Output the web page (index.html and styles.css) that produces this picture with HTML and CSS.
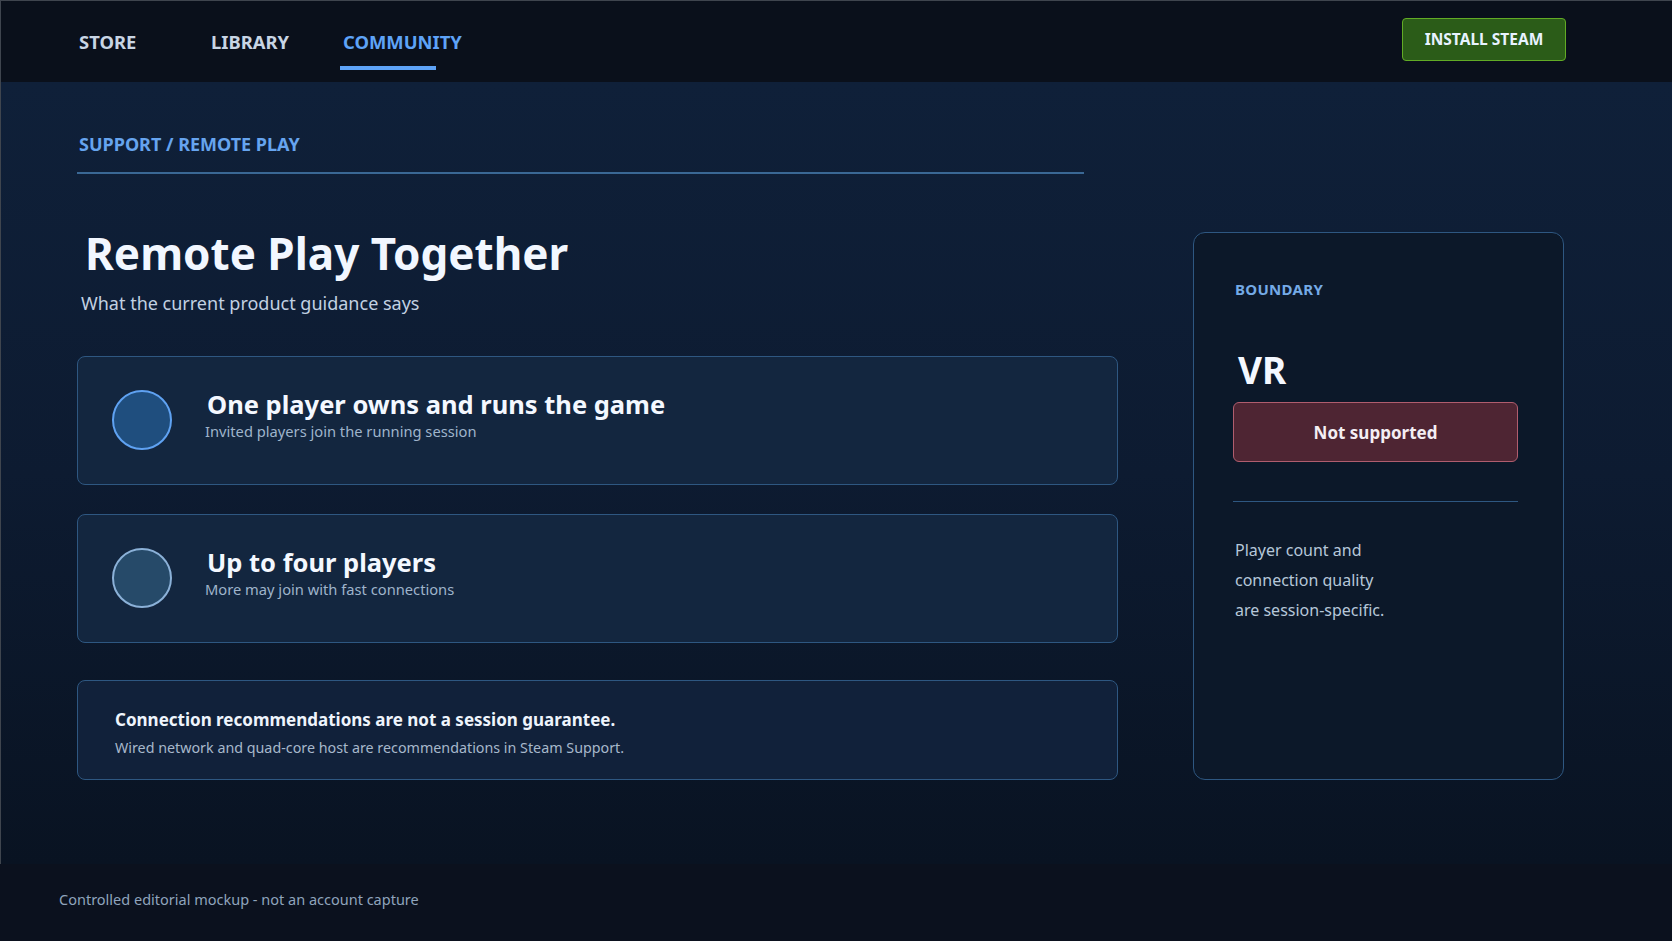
FILE: index.html
```html
<!DOCTYPE html>
<html lang="en">
<head>
<meta charset="utf-8">
<title>Remote Play Together</title>
<link rel="stylesheet" href="styles.css">
</head>
<body>
<div class="frame">
  <header class="topbar">
    <nav class="nav">
      <a class="nav-item">STORE</a>
      <a class="nav-item">LIBRARY</a>
      <a class="nav-item active">COMMUNITY</a>
    </nav>
    <a class="install">INSTALL STEAM</a>
  </header>
  <main class="main">
    <div class="crumb">SUPPORT / REMOTE PLAY</div>
    <div class="content">
      <section class="left">
        <h1 class="title">Remote Play Together</h1>
        <p class="subtitle">What the current product guidance says</p>
        <div class="card">
          <span class="dot dot-primary"></span>
          <div class="card-text">
            <div class="card-title">One player owns and runs the game</div>
            <div class="card-sub">Invited players join the running session</div>
          </div>
        </div>
        <div class="card">
          <span class="dot dot-muted"></span>
          <div class="card-text">
            <div class="card-title">Up to four players</div>
            <div class="card-sub">More may join with fast connections</div>
          </div>
        </div>
        <div class="note">
          <div class="note-title">Connection recommendations are not a session guarantee.</div>
          <div class="note-sub">Wired network and quad-core host are recommendations in Steam Support.</div>
        </div>
      </section>
      <aside class="panel">
        <div class="panel-label">BOUNDARY</div>
        <div class="panel-big">VR</div>
        <div class="badge">Not supported</div>
        <hr class="panel-rule">
        <p class="panel-text">Player count and<br>connection quality<br>are session-specific.</p>
      </aside>
    </div>
  </main>
</div>
<footer class="footer">Controlled editorial mockup - not an account capture</footer>
</body>
</html>
```

FILE: styles.css
```css
* { box-sizing: border-box; }
html, body { margin: 0; padding: 0; }
body {
  background: #0b111e;
  font-family: "Noto Sans", "Open Sans", Arial, sans-serif;
  color: #e8f0fa;
  width: 1672px;
  height: 941px;
  overflow: hidden;
}
.frame {
  border-top: 1px solid #3f454e;
  border-left: 1px solid #3f454e;
}
.topbar {
  height: 81px;
  background: #0a101b;
  display: flex;
  align-items: flex-start;
  justify-content: space-between;
  padding: 0 106px 0 78px;
}
.nav {
  display: flex;
  height: 100%;
}
.nav-item {
  position: relative;
  width: 132px;
  padding-top: 28px;
  font-size: 18.4px;
  line-height: 26px;
  font-weight: 700;
  color: #c8d5e4;
  text-decoration: none;
}
.nav-item.active { color: #5ea3f7; }
.nav-item.active::after {
  content: "";
  position: absolute;
  left: -3px;
  top: 65px;
  width: 96px;
  height: 4px;
  background: #5ea3f7;
}
.install {
  margin-top: 17px;
  width: 164px;
  height: 43px;
  padding-bottom: 2px;
  display: flex;
  align-items: center;
  justify-content: center;
  background: #2b5c18;
  border: 1px solid #62ab25;
  border-radius: 4px;
  color: #e8f3ff;
  font-size: 15.5px;
  font-weight: 700;
}
.main {
  height: 782px;
  background: linear-gradient(180deg, #0f2039 0%, #0d1b31 50%, #091322 100%);
  padding: 50px 0 0 76px;
}
.crumb {
  width: 1007px;
  padding: 0 0 16px 2px;
  border-bottom: 2px solid #3a6895;
  color: #66a4ef;
  font-size: 18px;
  font-weight: 700;
  line-height: 24px;
}
.content {
  display: grid;
  grid-template-columns: 1041px 371px;
  column-gap: 75px;
  margin-top: 58px;
  align-items: stretch;
}
.left { display: flex; flex-direction: column; }
.title {
  margin: -5px 0 0 8px;
  font-size: 44px;
  font-weight: 700;
  line-height: 52px;
  color: #f2f7ff;
}
.subtitle {
  margin: 11px 0 0 4px;
  font-size: 18px;
  line-height: 26px;
  color: #c2d1e2;
}
.card {
  margin-top: 40px;
  height: 129px;
  display: flex;
  align-items: center;
  background: #13263f;
  border: 1px solid #2e5781;
  border-radius: 8px;
  padding-left: 34px;
}
.card + .card { margin-top: 29px; }
.dot {
  width: 60px;
  height: 60px;
  border-radius: 50%;
  flex: none;
  margin-top: -2px;
}
.dot-primary { background: #1f4e7e; border: 2px solid #5fa2f2; }
.dot-muted { background: #264a69; border: 2px solid #8bb1d8; }
.card-text { margin: 0 0 10px 33px; }
.card-title {
  font-size: 25.5px;
  font-weight: 700;
  line-height: 30px;
  color: #f4f8ff;
  padding-left: 2px;
}
.card-sub {
  font-size: 14.7px;
  line-height: 24px;
  color: #9fb4cb;
}
.note {
  margin-top: 37px;
  height: 100px;
  background: #11213a;
  border: 1px solid #2e5781;
  border-radius: 8px;
  padding: 27px 0 0 37px;
}
.note-title {
  font-size: 17px;
  font-weight: 700;
  line-height: 24px;
  color: #eef4fc;
}
.note-sub {
  margin-top: 6px;
  font-size: 14.3px;
  line-height: 20px;
  color: #a7b8cb;
}
.panel {
  background: #0c1829;
  border: 1px solid #2e5781;
  border-radius: 12px;
  padding: 46px 45px 0 39px;
}
.panel-label {
  padding-left: 2px;
  font-size: 15px;
  letter-spacing: 0.3px;
  font-weight: 700;
  line-height: 20px;
  color: #74aae6;
}
.panel-big {
  margin-top: 49px;
  padding-left: 5px;
  font-size: 37px;
  font-weight: 700;
  line-height: 44px;
  color: #f4f8ff;
}
.badge {
  margin-top: 10px;
  height: 60px;
  display: flex;
  align-items: center;
  justify-content: center;
  background: #4e2533;
  border: 1px solid #b05d6e;
  border-radius: 6px;
  font-size: 17px;
  font-weight: 700;
  color: #f4eef3;
}
.panel-rule {
  margin: 39px 0 0;
  border: 0;
  border-top: 1px solid #2e5781;
}
.panel-text {
  margin: 33px 0 0 2px;
  font-size: 16px;
  line-height: 30px;
  color: #b6c7d9;
}
.footer {
  padding: 24px 0 0 59px;
  font-size: 14.5px;
  line-height: 22px;
  color: #8fa4bc;
}
```
